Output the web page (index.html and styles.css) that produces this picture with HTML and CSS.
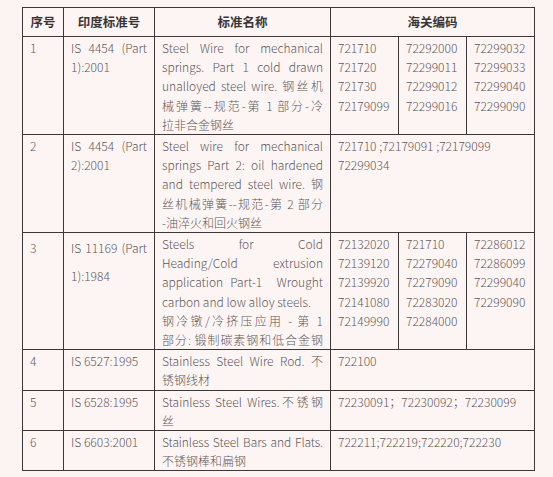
FILE: index.html
```html
<!DOCTYPE html>
<html lang="zh">
<head>
<meta charset="utf-8">
<title>印度标准</title>
<link rel="stylesheet" href="styles.css">
</head>
<body>
<table class="std">
  <colgroup>
    <col class="c-no"><col class="c-is"><col class="c-name"><col class="c-code"><col class="c-code"><col class="c-code">
  </colgroup>
  <thead>
    <tr>
      <th>序号</th>
      <th>印度标准号</th>
      <th>标准名称</th>
      <th colspan="3">海关编码</th>
    </tr>
  </thead>
  <tbody>
    <tr>
      <td>1</td>
      <td><span class="ln jl">IS 4454 (Part</span><span class="ln">1):2001</span></td>
      <td>
        <span class="ln jl">Steel Wire for mechanical</span>
        <span class="ln jl">springs. Part 1 cold drawn</span>
        <span class="ln jl">unalloyed steel wire. 钢丝机</span>
        <span class="ln jl">械弹簧--规范-第 1 部分-冷</span>
        <span class="ln">拉非合金钢丝</span>
      </td>
      <td><span class="ln">721710</span><span class="ln">721720</span><span class="ln">721730</span><span class="ln">72179099</span></td>
      <td><span class="ln">72292000</span><span class="ln">72299011</span><span class="ln">72299012</span><span class="ln">72299016</span></td>
      <td><span class="ln">72299032</span><span class="ln">72299033</span><span class="ln">72299040</span><span class="ln">72299090</span></td>
    </tr>
    <tr>
      <td>2</td>
      <td><span class="ln jl">IS 4454 (Part</span><span class="ln">2):2001</span></td>
      <td>
        <span class="ln jl">Steel wire for mechanical</span>
        <span class="ln jl">springs Part 2: oil hardened</span>
        <span class="ln jl">and tempered steel wire. 钢</span>
        <span class="ln jl">丝机械弹簧--规范-第 2 部分</span>
        <span class="ln">-油淬火和回火钢丝</span>
      </td>
      <td colspan="3"><span class="ln">721710 ;72179091 ;72179099</span><span class="ln">72299034</span></td>
    </tr>
    <tr>
      <td class="tall">3</td>
      <td class="tall"><span class="ln jl">IS 11169 (Part</span><span class="ln">1):1984</span></td>
      <td>
        <span class="ln jl">Steels for Cold</span>
        <span class="ln jl">Heading/Cold extrusion</span>
        <span class="ln jl">application Part-1&nbsp; Wrought</span>
        <span class="ln">carbon and low alloy steels.</span>
        <span class="ln jl">钢冷镦/冷挤压应用 - 第 1</span>
        <span class="ln jl">部分: 锻制碳素钢和低合金钢</span>
      </td>
      <td><span class="ln">72132020</span><span class="ln">72139120</span><span class="ln">72139920</span><span class="ln">72141080</span><span class="ln">72149990</span></td>
      <td><span class="ln">721710</span><span class="ln">72279040</span><span class="ln">72279090</span><span class="ln">72283020</span><span class="ln">72284000</span></td>
      <td><span class="ln">72286012</span><span class="ln">72286099</span><span class="ln">72299040</span><span class="ln">72299090</span></td>
    </tr>
    <tr>
      <td>4</td>
      <td>IS 6527:1995</td>
      <td><span class="ln jl">Stainless Steel Wire Rod. 不</span><span class="ln">锈钢线材</span></td>
      <td colspan="3">722100</td>
    </tr>
    <tr>
      <td>5</td>
      <td>IS 6528:1995</td>
      <td><span class="ln jl">Stainless Steel Wires.不锈钢</span><span class="ln">丝</span></td>
      <td colspan="3"><span class="ln codes">72230091；72230092；72230099</span></td>
    </tr>
    <tr>
      <td>6</td>
      <td>IS 6603:2001</td>
      <td><span class="ln jl tight">Stainless Steel Bars and Flats.</span><span class="ln">不锈钢棒和扁钢</span></td>
      <td colspan="3">722211;722219;722220;722230</td>
    </tr>
  </tbody>
</table>
</body>
</html>
```
FILE: styles.css
```css
html, body {
  margin: 0;
  padding: 0;
  background: #fcf4f3;
}

body {
  padding: 7px 0 0 22px;
  font-family: "Noto Sans CJK SC", "Noto Sans", sans-serif;
  font-size: 12px;
  font-weight: 300;
  color: #5e5858;
}

.std {
  border-collapse: collapse;
  table-layout: fixed;
  width: 512px;
  background: #fdf5f4;
}

.c-no { width: 41px; }
.c-is { width: 91px; }
.c-name { width: 176px; }
.c-code { width: 68px; }

.std th,
.std td {
  border: 1px solid #3c3838;
  padding: 0 7px 0 7px;
  line-height: 19.2px;
  vertical-align: top;
  text-align: left;
}

.std td {
  padding-top: 1px;
  padding-bottom: 0;
}

.std th {
  height: 28px;
  padding-top: 0;
  padding-bottom: 0;
  vertical-align: middle;
  text-align: center;
  font-size: 12.5px;
  font-weight: bold;
  color: #3a3535;
}

.std td.tall {
  line-height: 28px;
}

.ln {
  display: block;
  white-space: nowrap;
}

.jl {
  text-align: justify;
  text-align-last: justify;
}

.tight {
  letter-spacing: -0.1px;
}

.codes {
  text-align: justify;
  text-align-last: justify;
  width: 189px;
}
```
